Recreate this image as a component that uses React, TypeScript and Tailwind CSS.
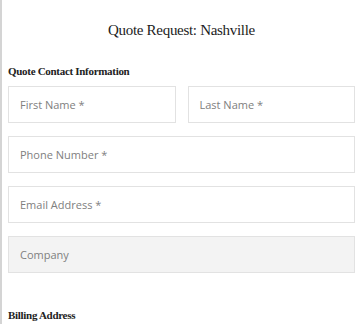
import React from 'react';

const serif = "font-['Liberation_Serif',serif]";
const sans = "font-['Open_Sans',sans-serif]";

const Field = ({ label, filled }: { label: string; filled?: boolean }) => (
    <div
        className={`h-[37px] flex items-center pl-[11px] pt-px border border-[#e2e2e2] ${filled ? 'bg-[#f3f3f3]' : 'bg-white'}`}
    >
        <span className={`${sans} text-[11px] text-[#808080]`}>{label}</span>
    </div>
);

export default function App() {
    return (
        <div className="w-[360px] h-[324px] overflow-hidden bg-white border-l-2 border-[#d4d4d4] pl-[6px] pr-[5px]">
            <div className={`${serif} text-[15px] leading-[20px] text-[#1c1c1c] text-center pt-[20px] tracking-[-0.3px]`}>
                Quote Request: Nashville
            </div>
            <div className={`${serif} font-bold text-[11px] leading-[16px] text-[#222] mt-[23px] tracking-[-0.3px]`}>
                Quote Contact Information
            </div>
            <div className="mt-[7px] flex flex-col gap-[13px]">
                <div className="grid grid-cols-2 gap-[12px]">
                    <Field label="First Name *" />
                    <Field label="Last Name *" />
                </div>
                <Field label="Phone Number *" />
                <Field label="Email Address *" />
                <Field label="Company" filled />
            </div>
            <div className={`${serif} font-bold text-[11px] leading-[16px] text-[#222] mt-[34px] tracking-[-0.3px]`}>
                Billing Address
            </div>
        </div>
    );
}
